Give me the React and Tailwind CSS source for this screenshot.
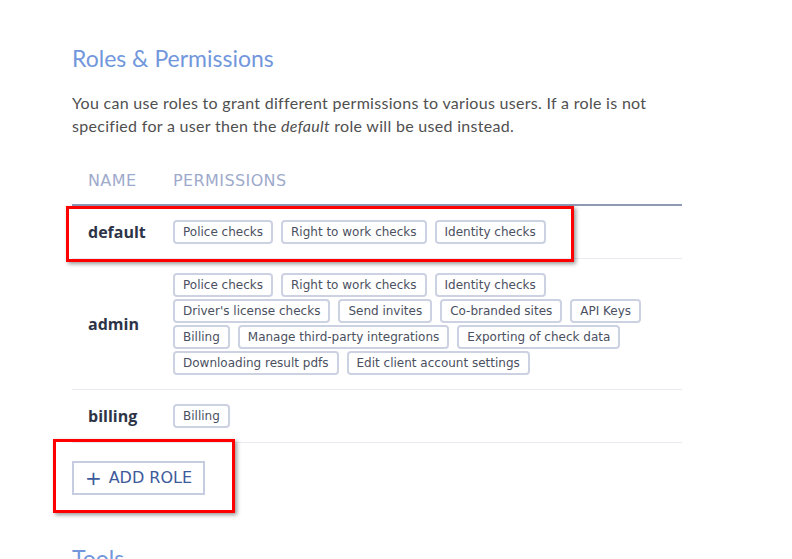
import React from "react";

const roles = [
  { name: "default", perms: ["Police checks", "Right to work checks", "Identity checks"] },
  {
    name: "admin",
    perms: [
      "Police checks",
      "Right to work checks",
      "Identity checks",
      "Driver's license checks",
      "Send invites",
      "Co-branded sites",
      "API Keys",
      "Billing",
      "Manage third-party integrations",
      "Exporting of check data",
      "Downloading result pdfs",
      "Edit client account settings",
    ],
  },
  { name: "billing", perms: ["Billing"] },
];

const headFont = { fontFamily: "Lato, 'Open Sans', sans-serif" };
const tagFont = { fontFamily: "'DejaVu Sans', 'Noto Sans', sans-serif" };
const nameFont = { fontFamily: "'Open Sans', 'Noto Sans', sans-serif" };

const Tag = ({ label }) => (
  <span
    className="h-6 px-[8px] flex items-center border-2 border-[#cdd2e3] rounded-[4px] text-[12px] text-[#4b5061]"
    style={tagFont}
  >
    {label}
  </span>
);

const App = () => {
  return (
    <div className="relative min-h-screen bg-white overflow-hidden" style={headFont}>
      <div className="pl-[72px] pt-[43px] w-[682px]">
        {/* ================= HEADING ================= */}
        <h2 className="text-[23px] leading-[30px] text-[#7297dc]">Roles &amp; Permissions</h2>

        <p className="mt-[18px] text-[16px] leading-[23px] tracking-[0.3px] text-[#505050]">
          You can use roles to grant different permissions to various users. If a role is not
          specified for a user then the <em>default</em> role will be used instead.
        </p>

        {/* ================= TABLE ================= */}
        <div className="mt-[20px]">
          <div
            className="flex items-center h-[49px] border-b-2 border-[#8e99b6] text-[16px] tracking-[0.4px] text-[#9eaacb] uppercase"
            style={tagFont}
          >
            <div className="w-[101px] pl-4">Name</div>
            <div>Permissions</div>
          </div>

          {roles.map((role) => (
            <div key={role.name} className="flex items-center pt-[14px] pb-[14px] border-b border-[#e8ebf3]">
              <div className="w-[101px] pl-4 text-[16px] font-bold text-[#2d3447]" style={nameFont}>
                {role.name}
              </div>
              <div className="flex-1 flex flex-wrap gap-x-2 gap-y-[2px] pr-[40px]">
                {role.perms.map((p) => (
                  <Tag key={p} label={p} />
                ))}
              </div>
            </div>
          ))}
        </div>

        <button
          className="mt-[18px] h-[34px] w-[133px] flex items-center justify-center gap-[7px] border-2 border-[#c7cde0] text-[16px] text-[#3d5a9b] uppercase"
          style={tagFont}
        >
          <span className="text-[20px] leading-none">+</span>
          Add role
        </button>

        <h2 className="mt-[48px] text-[23px] leading-[30px] text-[#7297dc]">Tools</h2>
      </div>

      {/* annotation boxes */}
      <div className="absolute left-[66px] top-[206px] w-[508px] h-[56px] border-[3px] border-[#ff0000] shadow-[2px_2px_4px_rgba(0,0,0,0.4)]" />
      <div className="absolute left-[53px] top-[439px] w-[182px] h-[74px] border-[3px] border-[#ff0000] shadow-[2px_2px_4px_rgba(0,0,0,0.4)]" />
    </div>
  );
};

export default App;
